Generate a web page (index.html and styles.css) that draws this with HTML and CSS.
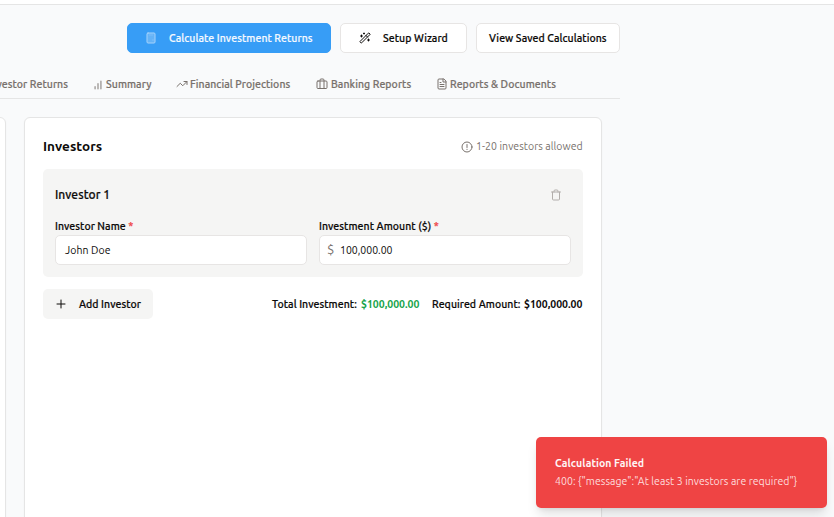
FILE: index.html
```
<!DOCTYPE html>
<html lang="en">
<head>
<meta charset="utf-8">
<title>Investment Calculator</title>
<link rel="stylesheet" href="styles.css">
</head>
<body>
<div class="topbar"></div>
<main class="content">
  <div class="actions">
    <button class="btn primary"><svg class="icon" viewBox="0 0 24 24"><rect x="4" y="2" width="16" height="20" rx="2" fill="currentColor" fill-opacity=".35"/><path d="M8 6h8M16 14v4M16 10h.01M12 10h.01M8 10h.01M12 14h.01M8 14h.01M12 18h.01M8 18h.01" stroke-opacity=".5"/></svg><span>Calculate Investment Returns</span></button>
    <button class="btn wizard"><svg class="icon" viewBox="0 0 24 24"><path d="m21.64 3.64-1.28-1.28a1.21 1.21 0 0 0-1.72 0L2.36 18.64a1.21 1.21 0 0 0 0 1.72l1.28 1.28a1.2 1.2 0 0 0 1.72 0L21.64 5.36a1.2 1.2 0 0 0 0-1.72M14 7l3 3M5 6v4M19 14v4M10 2v2M7 8H3M21 16h-4M11 3H9"/></svg><span>Setup Wizard</span></button>
    <button class="btn saved"><span>View Saved Calculations</span></button>
  </div>
  <nav class="tabs">
    <a class="tab tab-returns"><span>Investor Returns</span></a>
    <a class="tab tab-summary"><svg class="icon" viewBox="0 0 24 24"><path d="M5 21v-5M12 21V9M19 21V3" stroke-width="3.5"/></svg><span>Summary</span></a>
    <a class="tab tab-projections"><svg class="icon" viewBox="0 0 24 24"><path d="m22 7-8.500 8.500-5-5L2 17M16 7h6v6"/></svg><span>Financial Projections</span></a>
    <a class="tab tab-banking"><svg class="icon" viewBox="0 0 24 24"><rect x="2" y="6" width="20" height="15" rx="2"/><path d="M8 21V4a2 2 0 0 1 2-2h4a2 2 0 0 1 2 2v17"/></svg><span>Banking Reports</span></a>
    <a class="tab tab-documents"><svg class="icon" viewBox="0 0 24 24"><path d="M15 2H6a2 2 0 0 0-2 2v16a2 2 0 0 0 2 2h12a2 2 0 0 0 2-2V7ZM14 2v6h6M10 9H8M16 13H8M16 17H8"/></svg><span>Reports &amp; Documents</span></a>
  </nav>
  <div class="cards">
    <section class="card card-side"></section>
    <section class="card card-investors">
      <header class="card-head">
        <h2>Investors</h2>
        <p class="hint"><svg class="icon" viewBox="0 0 24 24"><circle cx="12" cy="12" r="10"/><path d="M12 7v6M12 16.500v.5"/></svg><span>1-20 investors allowed</span></p>
      </header>
      <div class="investor">
        <div class="investor-head">
          <h3>Investor 1</h3>
          <svg class="icon trash" viewBox="0 0 24 24"><path d="M3 6h18M19 6v14a2 2 0 0 1-2 2H7a2 2 0 0 1-2-2V6M8 6V4a2 2 0 0 1 2-2h4a2 2 0 0 1 2 2v2"/></svg>
        </div>
        <div class="fields">
          <div class="field">
            <div class="label"><span>Investor Name</span> <span class="req">*</span></div>
            <div class="input"><span>John Doe</span></div>
          </div>
          <div class="field">
            <div class="label"><span>Investment Amount ($)</span> <span class="req">*</span></div>
            <div class="input"><span class="currency">$</span><span class="value">100,000.00</span></div>
          </div>
        </div>
      </div>
      <footer class="card-foot">
        <button class="add"><svg class="icon" viewBox="0 0 24 24"><path d="M4 12h16M12 4v16"/></svg><span>Add Investor</span></button>
        <div class="totals">
          <div class="total"><span class="t-total">Total Investment:</span><b class="ok">$100,000.00</b></div>
          <div class="total"><span class="t-required">Required Amount:</span><b>$100,000.00</b></div>
        </div>
      </footer>
    </section>
  </div>
</main>
<div class="toast">
  <strong>Calculation Failed</strong>
  <span>400: {"message":"At least 3 investors are required"}</span>
</div>
</body>
</html>
```
FILE: styles.css
```
* { box-sizing: border-box; }
html, body { height: 100%; overflow: hidden; }
body {
  margin: 0;
  background: #f9fafb;
  color: #0c0a09;
  font: 10.5px/15px Ubuntu, "Noto Sans", sans-serif;
  letter-spacing: .06px;
  white-space: nowrap;
}
button { font: inherit; color: inherit; letter-spacing: inherit; border: 0; padding: 0; }
h2, h3, p { margin: 0; }
.btn, .tabs, .label, .add, .totals, h3 { -webkit-text-stroke: .2px currentColor; }
.icon {
  flex: none;
  width: 12px;
  height: 12px;
  fill: none;
  stroke: currentColor;
  stroke-width: 2;
  stroke-linecap: round;
  stroke-linejoin: round;
}
.topbar { height: 5px; background: #fff; border-bottom: 1px solid #e5e5e5; }
.content { width: 620px; padding-top: 18px; }

.actions { display: flex; justify-content: flex-end; gap: 9px; }
.btn {
  display: flex;
  align-items: center;
  height: 30px;
  background: #fff;
  border: 1px solid #e7e5e4;
  border-radius: 5px;
  font-weight: 500;
}
.primary { width: 204px; padding-left: 17px; gap: 12px; background: #379df6; border-color: #379df6; color: #f4f9ff; }
.primary .icon { opacity: .6; }
.wizard { width: 127px; padding-left: 18px; gap: 12px; }
.saved { width: 144px; padding-left: 12px; }

.tabs {
  display: flex;
  justify-content: flex-end;
  gap: 24px;
  height: 46px;
  padding: 16px 63px 0 0;
  border-bottom: 1px solid #e5e5e5;
  color: #78716c;
  font-weight: 500;
}
.tab { display: flex; gap: 2px; height: 30px; align-items: center; }
.tab span { display: block; }
.tab-returns { margin-right: 1px; }
.tab-summary .icon { width: 10px; margin: 2px 1px 0 0; opacity: .65; }
.tab-summary span { width: 46px; }
.tab-projections span { width: 102px; }
.tab-banking .icon { margin-right: 1px; }
.tab-banking span { width: 81px; }
.tab-documents span { width: 107px; }

.cards { display: flex; justify-content: flex-end; gap: 18px; margin-top: 18px; padding-right: 18px; }
.card { height: 420px; background: #fff; border: 1px solid #e5e5e5; border-radius: 6px; box-shadow: 0 1px 2px rgba(0, 0, 0, .04); }
.card-side { flex: none; width: 578px; }
.card-investors { flex: none; width: 578px; padding: 18px; }
.card-head { display: flex; justify-content: space-between; align-items: center; height: 21px; }
h2 { font-size: 13.5px; font-weight: 600; }
.hint { display: flex; align-items: center; gap: 3px; color: #78716c; }
.hint span { width: 107px; }

.investor { height: 108px; margin-top: 12px; padding: 12px; background: #f5f5f4; border-radius: 5px; }
.investor-head { display: flex; justify-content: space-between; align-items: center; height: 28px; padding-right: 9px; }
h3 { margin-top: -2px; font-size: 12px; font-weight: 500; }
.trash { color: #b2aeab; }
.fields { display: grid; grid-template-columns: 1fr 1fr; gap: 12px; margin-top: 10px; }
.label { height: 16px; font-weight: 500; }
.req { color: #ef4444; }
.input {
  display: flex;
  align-items: center;
  height: 30px;
  padding-left: 9px;
  background: #fff;
  border: 1px solid #e7e5e4;
  border-radius: 5px;
}
.currency { width: 13px; margin: -2px 0 0 -2px; color: #78716c; font-size: 13px; }
.value { letter-spacing: 0; }

.card-foot { display: flex; justify-content: space-between; align-items: center; margin-top: 12px; }
.add { display: flex; align-items: center; gap: 12px; width: 110px; height: 30px; padding-left: 12px; border-radius: 5px; background: #f5f5f4; font-weight: 500; }
.totals { display: flex; gap: 12px; font-weight: 500; }
.total { display: flex; gap: 3px; }
.total b { width: 59px; font-weight: 600; letter-spacing: 0; -webkit-text-stroke: 0; }
.t-total { width: 86px; }
.t-required { width: 89px; }
.ok { color: #16a34a; }

.toast {
  position: absolute;
  left: 536px;
  top: 437px;
  width: 291px;
  height: 71px;
  padding: 19px 19px;
  display: flex;
  flex-direction: column;
  gap: 3px;
  border-radius: 5px;
  background: #ef4444;
  color: #fef5f5;
  box-shadow: 0 8px 12px -2px rgba(0, 0, 0, .12), 0 3px 5px -3px rgba(0, 0, 0, .12);
}
.toast strong { font-weight: 600; }
.toast span { color: #fddddd; }
```
